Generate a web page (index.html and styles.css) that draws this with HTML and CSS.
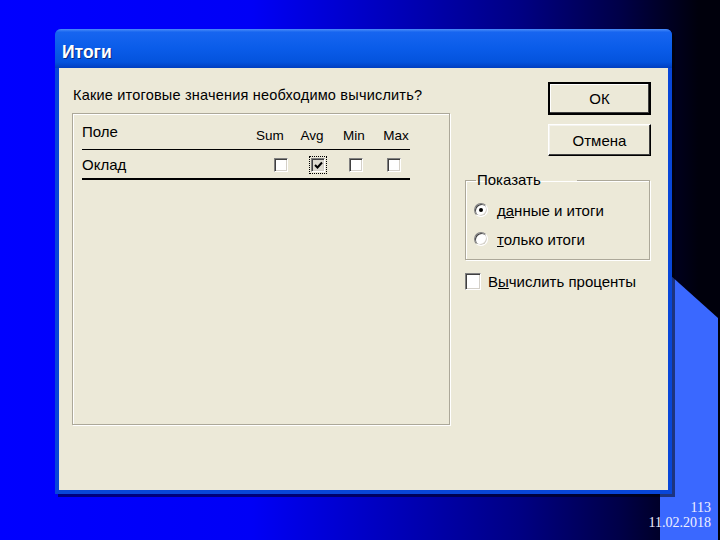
FILE: index.html
```html
<!DOCTYPE html>
<html lang="ru">
<head>
    <meta charset="UTF-8">
    <title>Итоги</title>
    <link rel="stylesheet" href="styles.css">
</head>
<body>
    <div class="slide">
        <div class="corner"></div>

        <div class="dialog">
            <div class="titlebar">Итоги</div>
            <div class="dialog-body">
                <div class="left-col">
                    <p class="prompt">Какие итоговые значения необходимо вычислить?</p>
                    <div class="listbox">
                        <div class="list-head">
                            <div class="grid-head">
                                <span class="field-name">Поле</span>
                                <span class="col-label">Sum</span>
                                <span class="col-label">Avg</span>
                                <span class="col-label">Min</span>
                                <span class="col-label">Max</span>
                            </div>
                        </div>
                        <div class="list-row">
                            <div class="grid-row">
                                <span class="field-name">Оклад</span>
                                <span class="cell"><span class="chk"></span></span>
                                <span class="cell">
                                    <span class="chk chk-on">
                                        <svg width="9" height="9" viewBox="0 0 9 9"><path d="M1 4 L3.5 6.5 L8 1.5" fill="none" stroke="#000" stroke-width="2"/></svg>
                                    </span>
                                </span>
                                <span class="cell"><span class="chk"></span></span>
                                <span class="cell"><span class="chk"></span></span>
                            </div>
                        </div>
                    </div>
                </div>

                <div class="right-col">
                    <button class="btn btn-default">ОК</button>
                    <button class="btn">Отмена</button>

                    <fieldset class="group">
                        <legend>Показать</legend>
                        <div class="option">
                            <span class="radio radio-on"></span>
                            <span>д<u>а</u>нные и итоги</span>
                        </div>
                        <div class="option">
                            <span class="radio"></span>
                            <span><u>т</u>олько итоги</span>
                        </div>
                    </fieldset>

                    <div class="percent">
                        <span class="chk chk-big"></span>
                        <span>В<u>ы</u>числить проценты</span>
                    </div>
                </div>
            </div>
        </div>

        <div class="slide-num">
            <div>113</div>
            <div>11.02.2018</div>
        </div>
    </div>
</body>
</html>
```

FILE: styles.css
```css
body {
    margin: 0;
    font-family: "Liberation Sans", Arial, sans-serif;
}

.slide {
    position: relative;
    width: 720px;
    height: 540px;
    overflow: hidden;
    padding-top: 29px;
    box-sizing: border-box;
    background: linear-gradient(to right, #0000ff 0%, #0000f6 35%, #0000b0 58%, #000084 72%, #000048 86%, #00000c 97%);
}

/* light blue shape in the corner of the slide */
.corner {
    position: absolute;
    left: 660px;
    top: 266px;
    width: 58px;
    height: 274px;
    background-color: #3a68ff;
    clip-path: polygon(0 0, 58px 52px, 58px 100%, 0 100%);
}

.dialog {
    position: relative;
    margin-left: 55px;
    width: 617px;
    height: 465px;
    box-sizing: border-box;
    padding: 0 4px 4px 4px;
    background-color: #0846d8;
    border-radius: 6px 6px 0 0;
    box-shadow: 3px 3px 0 rgba(0, 0, 0, 0.5);
}

.titlebar {
    height: 39px;
    margin: 0 -4px;
    padding-left: 7px;
    border-radius: 6px 6px 0 0;
    background: linear-gradient(to bottom, #4a8cf8 0%, #1765f0 8%, #0a5ce9 50%, #0453dd 85%, #003ec0 100%);
    color: #fff;
    font-weight: bold;
    font-size: 17.5px;
    line-height: 47px;
    text-shadow: 1px 1px 0 #0a2a80;
}

.dialog-body {
    display: flex;
    height: 422px;
    padding: 14px 17px 0 13px;
    box-sizing: border-box;
    background-color: #ece9d8;
    font-size: 15px;
    color: #000;
}

.left-col {
    width: 378px;
}

.prompt {
    margin: 5px 0 0 1px;
    line-height: 16px;
    font-size: 14.5px;
    letter-spacing: 0.2px;
}

.listbox {
    margin-top: 10px;
    height: 312px;
    box-sizing: border-box;
    padding: 10px 0 0 9px;
    border: 1px solid #aca899;
    box-shadow: inset 1px 1px 0 #fff, 1px 1px 0 #fff;
}

.list-head {
    width: 328px;
    padding-bottom: 5px;
    border-bottom: 1px solid #000;
}

.list-row {
    width: 328px;
    padding: 7px 0 5px;
    border-bottom: 2px solid #000;
}

.grid-head {
    display: grid;
    grid-template-columns: 1fr 42px 42px 42px 42px;
    margin-right: -7px;
    line-height: 16px;
}

.grid-row {
    display: grid;
    grid-template-columns: 1fr 36px 38px 38px 38px;
    margin-right: -3px;
    line-height: 16px;
}

.col-label {
    margin-top: 4px;
    text-align: center;
    font-size: 13.5px;
}

.cell {
    display: flex;
    justify-content: center;
    align-items: center;
}

/* classic sunken checkbox */
.chk {
    display: inline-flex;
    align-items: center;
    justify-content: center;
    width: 12px;
    height: 12px;
    background-color: #fff;
    border: 1px solid;
    border-color: #808080 #fff #fff #808080;
    box-shadow: inset 1px 1px 0 #404040, inset -1px -1px 0 #d4d0c8;
}

.chk-on {
    background-color: #dedbd0;
    outline: 1px dotted #000;
    outline-offset: 1px;
}

.chk-big {
    width: 14px;
    height: 15px;
}

.right-col {
    display: flex;
    flex-direction: column;
    width: 186px;
    margin-left: 15px;
}

.btn {
    align-self: flex-end;
    width: 103px;
    height: 32px;
    margin: 0;
    padding: 0;
    font-family: "Liberation Sans", Arial, sans-serif;
    font-size: 15px;
    color: #000;
    background-color: #ece9d8;
    border: 1px solid;
    border-color: #fff #000 #000 #fff;
    box-shadow: inset -1px -1px 0 #404040, inset 1px 1px 0 #f4f3ee;
}

.btn-default {
    height: 33px;
    border: 2px solid #000;
    box-shadow: inset -1px -1px 0 #404040, inset 1px 1px 0 #fff;
}

.btn + .btn {
    margin-top: 9px;
}

.group {
    margin: 16px 1px 0 0;
    padding: 13px 0 11px 8px;
    border: 1px solid #aca899;
    box-shadow: inset 1px 1px 0 #fff, 1px 1px 0 #fff;
    min-width: 0;
}

.group legend {
    margin-left: 2px;
    padding: 0 36px 0 1px;
    line-height: 16px;
}

.option {
    display: flex;
    align-items: center;
    gap: 9px;
    height: 18px;
}

.option + .option {
    margin-top: 11px;
}

/* classic round radio button */
.radio {
    position: relative;
    width: 12px;
    height: 12px;
    border-radius: 50%;
    background-color: #fff;
    border: 1px solid;
    border-color: #808080 #fff #fff #808080;
    box-shadow: inset 1px 1px 0 #404040, inset -1px -1px 0 #d4d0c8;
}

.radio-on::after {
    content: "";
    position: absolute;
    left: 4px;
    top: 4px;
    width: 4px;
    height: 4px;
    border-radius: 50%;
    background-color: #000;
}

.percent {
    display: flex;
    align-items: center;
    gap: 7px;
    margin-top: 13px;
}

.slide-num {
    position: relative;
    margin-top: 6px;
    padding-right: 9px;
    text-align: right;
    font-family: "Liberation Serif", "Times New Roman", serif;
    font-size: 14px;
    line-height: 15px;
    color: #f0f0ff;
}
```
